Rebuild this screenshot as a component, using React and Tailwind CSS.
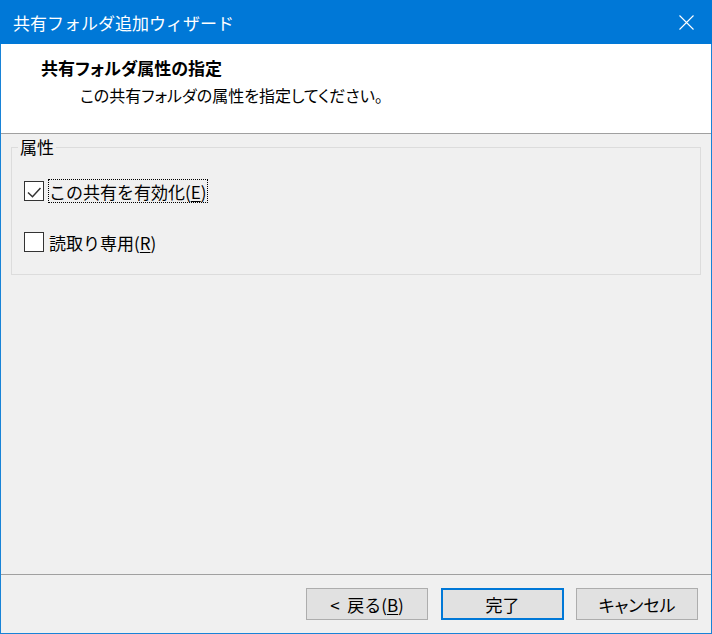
import React from "react";

const font = { fontFamily: '"Noto Sans CJK JP", "Noto Sans", sans-serif' };

function Btn({ children, primary, className = "" }) {
  return (
    <div
      className={
        "h-[32px] flex items-center justify-center bg-[#e1e1e1] text-[17px] text-black leading-none " +
        (primary ? "border-2 border-[#0078d7] " : "border border-[#adadad] ") +
        className
      }
    >
      {children}
    </div>
  );
}

function Check({ checked }) {
  return (
    <div className="w-[20px] h-[20px] shrink-0 border border-[#333333] bg-white relative">
      {checked && (
        <svg width="18" height="18" viewBox="0 0 18 18" className="absolute left-0 top-0">
          <path d="M3 10.5 L7.5 14.8 L15.5 6" fill="none" stroke="#333" strokeWidth="1.5" />
        </svg>
      )}
    </div>
  );
}

export default function App() {
  return (
    <div
      className="w-[712px] h-[634px] flex flex-col bg-[#f0f0f0] border-x border-b border-[#1883d7]"
      style={font}
    >
      <div className="h-[44px] -mx-px bg-[#0078d7] flex items-center justify-between pl-[13px] pr-[18px] shrink-0">
        <span className="text-white text-[17px] leading-none">共有フォルダ追加ウィザード</span>
        <svg width="15" height="15" viewBox="0 0 15 15">
          <path d="M0.5 0.5 L14.5 14.5 M14.5 0.5 L0.5 14.5" stroke="white" strokeWidth="1.1" />
        </svg>
      </div>
      <div className="h-[90px] bg-white border-b border-[#a0a0a0] shrink-0 pt-[13px]">
        <div className="pl-[40px] text-[17px] font-bold text-black leading-[22px] [font-feature-settings:'palt']">
          共有フォルダ属性の指定
        </div>
        <div className="pl-[79px] pt-[5px] text-[16px] text-black leading-[22px] [font-feature-settings:'palt']">
          この共有フォルダの属性を指定してください。
        </div>
      </div>
      <div className="flex-1 px-[10px] pt-[4px]">
        <fieldset className="border border-[#dcdcdc] h-[137px]">
          <legend className="ml-[6px] px-[2px] text-[17px] leading-[18px] text-black">属性</legend>
          <div className="pl-[12px]">
            <div className="flex items-center mt-[23px] h-[24px]">
              <Check checked />
              <div className="ml-[4px] pl-[1px] pr-[1px] h-[24px] flex items-center outline outline-1 outline-dotted outline-black -outline-offset-1 text-[17px] leading-none text-black">
                この共有を有効化(<span className="underline underline-offset-2">E</span>)
              </div>
            </div>
            <div className="flex items-center mt-[27px] h-[24px]">
              <Check />
              <div className="ml-[5px] text-[17px] leading-none text-black">
                読取り専用(<span className="underline underline-offset-2">R</span>)
              </div>
            </div>
          </div>
        </fieldset>
      </div>
      <div className="h-[59px] border-t border-[#a0a0a0] shrink-0 flex items-start justify-end pt-[13px] pr-[13px]">
        <Btn className="w-[122px] mr-[13px]">
          &lt;&nbsp;&nbsp;戻る(<span className="underline underline-offset-2">B</span>)
        </Btn>
        <Btn primary className="w-[123px] mr-[12px]">
          完了
        </Btn>
        <Btn className="w-[122px] [font-feature-settings:'palt']">キャンセル</Btn>
      </div>
    </div>
  );
}
